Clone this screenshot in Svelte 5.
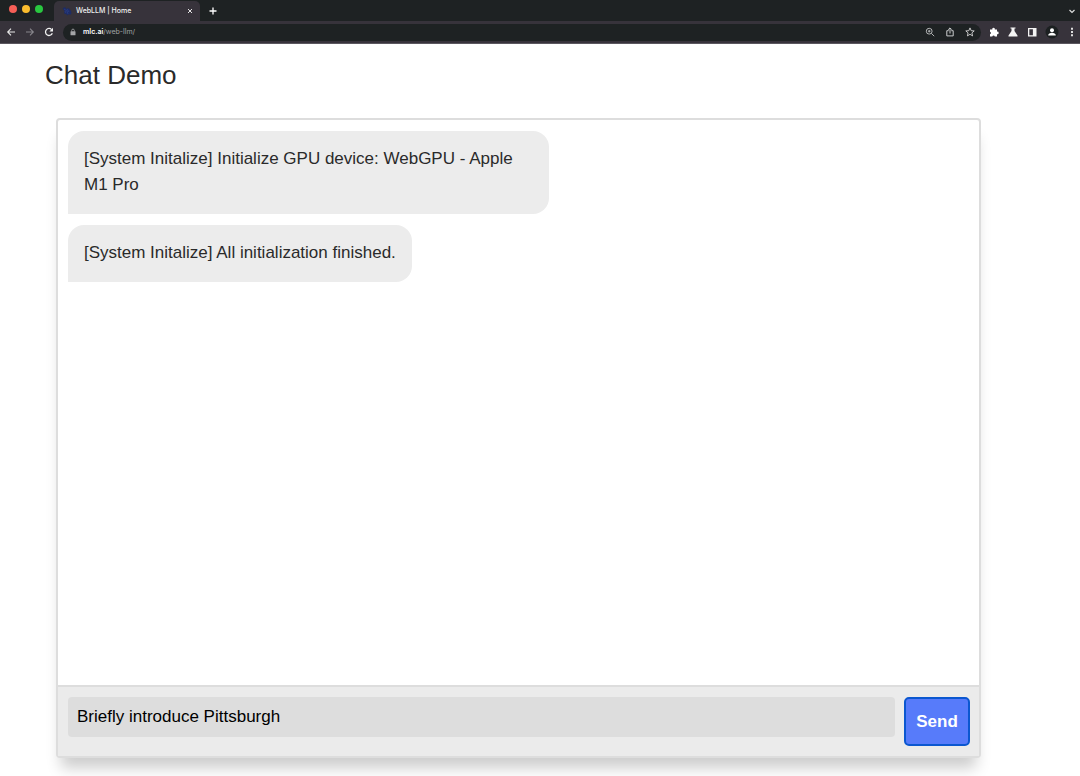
<script>
  let messages = [
    "[System Initalize] Initialize GPU device: WebGPU - Apple M1 Pro",
    "[System Initalize] All initialization finished.",
  ];
  let prompt = "Briefly introduce Pittsburgh";
  let address = "mlc.ai/web-llm/";

  // Host is drawn brighter than the rest of the address
  $: host = address.split("/")[0];
  $: path = address.slice(host.length);

  function send() {
    if (!prompt.trim()) return;
    messages = [...messages, prompt];
    prompt = "";
  }
</script>

<div class="window">
  <header class="browser">
    <div class="tabs">
      <div class="lights">
        <span class="light red"></span>
        <span class="light yellow"></span>
        <span class="light green"></span>
      </div>
      <div class="tab">
        <svg class="favicon" viewBox="0 0 10 10" width="10" height="10">
          <path d="M.5 2.500L3 1l1.500 2L6 2l1.500 1L9 5l.5 2.500L8 9 6.500 8 5.500 9.500 4 8 2 7.500 2.500 5z" fill="#1d2c66" />
          <path d="M2 3l3 2 1 3M5 3l2 3M3 5l1 2" fill="none" stroke="#30458c" stroke-width="0.6" />
        </svg>
        <span class="title">WebLLM | Home</span>
        <button class="icon close" aria-label="Close tab">
          <svg viewBox="0 0 8 8" width="8" height="8">
            <path d="M2 2l4 4M6 2l-4 4" stroke="#e3e3e3" />
          </svg>
        </button>
      </div>
      <button class="icon new-tab" aria-label="New tab">
        <svg viewBox="0 0 10 10" width="10" height="10">
          <path d="M5 1.500v7M1.500 5h7" stroke="#fff" stroke-width="1.3" />
        </svg>
      </button>
      <button class="icon search-tabs" aria-label="Search tabs">
        <svg viewBox="0 0 10 10" width="10" height="10">
          <path d="M2.500 4L5 6.500 7.500 4" fill="none" stroke="#ddd" stroke-width="1.2" />
        </svg>
      </button>
    </div>

    <nav class="toolbar">
      <div class="nav-buttons">
        <button class="icon" aria-label="Back">
          <svg viewBox="0 0 10 10" width="10" height="10">
            <path d="M9 5H2M5 1.700L1.700 5 5 8.300" fill="none" stroke="#e8e8e8" stroke-width="1.1" />
          </svg>
        </button>
        <button class="icon" aria-label="Forward">
          <svg viewBox="0 0 10 10" width="10" height="10">
            <path d="M1 5h7M5 1.700L8.300 5 5 8.300" fill="none" stroke="#88868c" stroke-width="1.1" />
          </svg>
        </button>
        <button class="icon" aria-label="Reload">
          <svg viewBox="0 0 10 10" width="10" height="10">
            <path d="M8.300 6.200A3.500 3.500 0 1 1 7.600 2.600" fill="none" stroke="#f1f1f1" stroke-width="1.300" />
            <path d="M9 .8v3.600H5.400z" fill="#f1f1f1" />
          </svg>
        </button>
      </div>

      <div class="address">
        <svg viewBox="0 0 8 8" width="8" height="8">
          <rect x="1.500" y="3.300" width="5" height="4" rx="0.500" fill="#a4a6a8" />
          <path d="M2.700 3.500V2.400a1.300 1.300 0 0 1 2.600 0v1.100" fill="none" stroke="#a4a6a8" stroke-width="0.800" />
        </svg>
        <input type="text" aria-label="Address" class="address-input" bind:value={address} />
        <span class="address-text" aria-hidden="true"><b>{host}</b>{path}</span>
        <div class="address-actions">
          <button class="icon" aria-label="Zoom">
            <svg viewBox="0 0 10 10" width="10" height="10">
              <circle cx="4.200" cy="4.200" r="2.900" fill="none" stroke="#bfc1c2" stroke-width="0.900" />
              <path d="M6.400 6.400L9.200 9.200M4.200 2.900v2.600M2.900 4.200h2.600" stroke="#bfc1c2" stroke-width="0.900" />
            </svg>
          </button>
          <button class="icon" aria-label="Share">
            <svg viewBox="0 0 10 10" width="10" height="10">
              <path d="M3.700 3.700H1.800v5.200h6.400V3.700H6.300M5 6.500V1M3.200 2.700L5 .9l1.800 1.800" fill="none" stroke="#c9cbcc" stroke-width="1" />
            </svg>
          </button>
          <button class="icon" aria-label="Bookmark this page">
            <svg viewBox="0 0 10 10" width="10" height="10">
              <path d="M5 .9l1.200 2.800 3 .2-2.300 2 .7 3L5 7.300 2.400 8.900l.7-3-2.300-2 3-.2z" fill="none" stroke="#d6d6d6" stroke-width="0.900" />
            </svg>
          </button>
        </div>
      </div>

      <div class="extensions">
        <button class="icon" aria-label="Extensions">
          <svg viewBox="0 0 10 10" width="10" height="10">
            <path d="M1 2.500h2.300a1.300 1.300 0 1 1 2.500 0H8v2.200a1.300 1.300 0 1 1 0 2.500v2.300H5.800a1.300 1.300 0 0 0-2.500 0H1V7.200a1.300 1.300 0 0 0 0-2.500z" fill="#fff" />
          </svg>
        </button>
        <button class="icon" aria-label="Labs">
          <svg viewBox="0 0 10 10" width="10" height="10">
            <path d="M2.500.5h5v1h-1V4l3 4.500v1h-9v-1l3-4.500V1.500h-1z" fill="#f4f4f4" />
          </svg>
        </button>
        <button class="icon" aria-label="Side panel">
          <svg viewBox="0 0 10 10" width="10" height="10">
            <path d="M1 1h8.500v8.500H1zM2.300 2.300v5.900h3.600V2.300z" fill="#f4f4f4" fill-rule="evenodd" />
          </svg>
        </button>
        <button class="icon profile" aria-label="Profile">
          <svg viewBox="0 0 14 14" width="14" height="14">
            <circle cx="7" cy="7" r="6.500" fill="#1c2021" />
            <circle cx="7" cy="5.200" r="2" fill="#fff" />
            <path d="M3.200 10.500c0-3.600 7.600-3.600 7.600 0z" fill="#fff" />
          </svg>
        </button>
        <button class="icon" aria-label="Menu">
          <svg viewBox="0 0 10 10" width="10" height="10">
            <path d="M4 .8h2v2H4zM4 4h2v2H4zM4 7.200h2v2H4z" fill="#ddd" />
          </svg>
        </button>
      </div>
    </nav>
  </header>

  <main>
    <h2>Chat Demo</h2>
    <section class="chat">
      <div class="messages">
        {#each messages as message}
          <div class="bubble">{message}</div>
        {/each}
      </div>
      <form class="input-area" on:submit|preventDefault={send}>
        <input type="text" aria-label="Message" class="prompt" bind:value={prompt} />
        <button class="send">Send</button>
      </form>
    </section>
  </main>
</div>

<style>
  :global(body) {
    margin: 0;
    background: #fff;
  }

  .window {
    display: flex;
    flex-direction: column;
    min-height: 100vh;
    font-family: "Liberation Sans", Arial, sans-serif;
    color: #2a2a2a;
  }

  button,
  input {
    font-family: inherit;
    margin: 0;
  }

  .icon {
    display: flex;
    padding: 0;
    border: none;
    background: transparent;
  }

  .browser {
    background: #37333b;
    border-bottom: 1px solid #5b575f;
  }

  .tabs {
    display: flex;
    align-items: center;
    height: 21px;
    background: #1e2223;
  }

  .lights {
    display: flex;
    gap: 5px;
    width: 45px;
    padding: 0 0 3px 9px;
  }

  .light {
    width: 8px;
    height: 8px;
    border-radius: 50%;
  }

  .red {
    background: #f65f57;
  }

  .yellow {
    background: #fbbd2e;
  }

  .green {
    background: #29c840;
  }

  .tab {
    display: flex;
    align-items: center;
    align-self: flex-end;
    gap: 4px;
    box-sizing: border-box;
    width: 146px;
    height: 20px;
    padding: 0 6px 0 8px;
    border-radius: 5px 5px 0 0;
    background: #37333b;
  }

  .title {
    flex: 1;
    font-family: Inter, "Liberation Sans", sans-serif;
    font-size: 7px;
    font-weight: 500;
    line-height: 10px;
    color: #f0f0f0;
  }

  .new-tab {
    margin-left: 8px;
  }

  .search-tabs {
    margin-left: auto;
    margin-right: 3px;
  }

  .toolbar {
    display: flex;
    align-items: center;
    height: 22px;
    padding: 0 3px 0 6px;
  }

  .nav-buttons {
    display: flex;
    gap: 9px;
    margin-right: 9px;
  }

  .address {
    position: relative;
    display: flex;
    align-items: center;
    flex: 1;
    height: 17px;
    padding: 0 6px;
    border-radius: 9px;
    background: #1e2223;
  }

  .address-input {
    flex: 1;
    min-width: 0;
    height: 16px;
    padding: 0 6px;
    border: none;
    outline: none;
    background: transparent;
    color: transparent;
    caret-color: #fff;
    font-family: Inter, "Liberation Sans", sans-serif;
    font-size: 7px;
  }

  /* two-tone address over the plain text box */
  .address-text {
    position: absolute;
    left: 20px;
    pointer-events: none;
    font-family: Inter, "Liberation Sans", sans-serif;
    font-size: 7px;
    line-height: 10px;
    color: #a0a2a4;
  }

  .address-text b {
    font-weight: 600;
    color: #fff;
  }

  .address-actions {
    display: flex;
    gap: 10px;
  }

  .extensions {
    display: flex;
    align-items: center;
    gap: 9px;
    margin-left: 8px;
  }

  .profile {
    margin: 0 -1px;
  }

  main {
    display: flex;
    flex-direction: column;
    flex: 1;
    padding: 15px 99px 18px 45px;
  }

  h2 {
    margin: 0 0 27px;
    font-size: 26px;
    font-weight: 400;
    line-height: 32px;
  }

  .chat {
    display: flex;
    flex-direction: column;
    flex: 1;
    margin-left: 11px;
    border: 2px solid #ddd;
    border-radius: 4px;
    background: #fff;
    box-shadow: 0 15px 14px -5px rgba(0, 0, 0, 0.2);
  }

  .messages {
    display: flex;
    flex-direction: column;
    align-items: flex-start;
    flex: 1;
    gap: 11px;
    padding: 11px 10px;
  }

  .bubble {
    box-sizing: border-box;
    max-width: 481px;
    padding: 15px 16px 16px;
    border-radius: 16px 16px 16px 0;
    background: #ececec;
    font-size: 17px;
    line-height: 26px;
  }

  .input-area {
    display: flex;
    align-items: flex-start;
    gap: 9px;
    padding: 10px 9px 10px 10px;
    border-top: 2px solid #ddd;
    background: #ebebeb;
  }

  .prompt {
    flex: 1;
    min-width: 0;
    height: 40px;
    padding: 0 9px;
    border: none;
    border-radius: 4px;
    outline: none;
    background: #ddd;
    color: #000;
    font-size: 17px;
  }

  .send {
    width: 66px;
    height: 49px;
    padding: 0;
    border: 2px solid #0b57d0;
    border-radius: 5px;
    background: #577bfa;
    color: #fff;
    font-size: 17px;
    font-weight: 700;
  }
</style>
